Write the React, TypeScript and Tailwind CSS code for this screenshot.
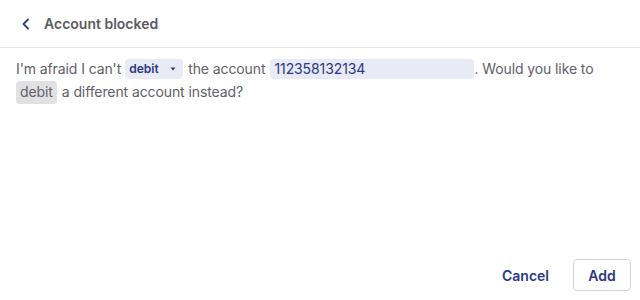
import React from "react";

export default function App() {
  return (
    <div className="w-[640px] h-[300px] bg-white flex flex-col" style={{ fontFamily: "Inter, 'Noto Sans', sans-serif" }}>
      <div className="h-[48px] flex items-center border-b border-[#e4e4ea] px-[16px] shrink-0">
        <svg width="14" height="14" viewBox="0 0 14 14" className="ml-[3px]">
          <path d="M9 2.5 L4.5 7 L9 11.5" fill="none" stroke="#2e3a86" strokeWidth="1.8" strokeLinecap="round" strokeLinejoin="round" />
        </svg>
        <span className="ml-[11px] text-[14px] font-semibold text-[#5a5b63]">Account blocked</span>
      </div>
      <div className="px-[16px] pt-[10px] text-[14px] leading-[22px] text-[#5f6068] tracking-[-0.1px]">
        <div className="flex items-center h-[22px]">
          <span>I'm afraid I can't</span>
          <span className="ml-[4px] h-[20px] w-[58px] rounded-[4px] bg-[#e8eaf5] flex items-center px-[4px] text-[12px] font-semibold text-[#2b3886] tracking-normal">
            debit
            <svg width="6" height="4" viewBox="0 0 6 4" className="ml-[11px]">
              <path d="M0.5 0.5 L5.5 0.5 L3 3.5 Z" fill="#2b3886" />
            </svg>
          </span>
          <span className="ml-[5px]">the account</span>
          <span className="ml-[5px] h-[20px] w-[204px] rounded-[4px] bg-[#e8eaf5] flex items-center px-[4px] text-[#2b3886]">112358132134</span>
          <span>. Would you like to</span>
        </div>
        <div className="flex items-center h-[24px]">
          <span className="h-[23px] rounded-[4px] bg-[#e1e1e3] px-[4px] flex items-center">debit</span>
          <span className="ml-[5px]">a different account instead?</span>
        </div>
      </div>
      <div className="flex-1" />
      <div className="flex items-center justify-end gap-[24px] pr-[9px] pb-[9px]">
        <button className="text-[14px] font-semibold text-[#2b3886]">Cancel</button>
        <button className="h-[32px] w-[58px] rounded-[4px] border border-[#d4d5da] text-[14px] font-semibold text-[#2b3886] bg-white">Add</button>
      </div>
    </div>
  );
}
